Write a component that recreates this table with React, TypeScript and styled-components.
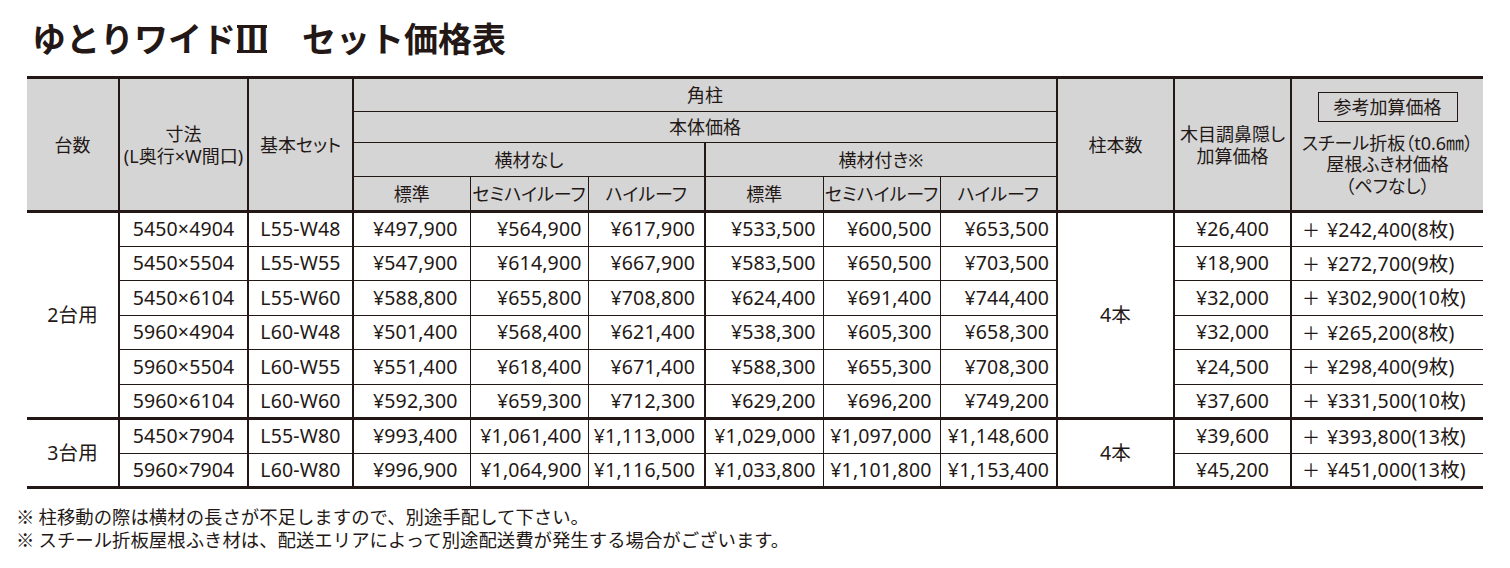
import React from 'react';
import styled, { createGlobalStyle, css } from 'styled-components';

const INK = '#231815';
const HEAD_BG = '#d5d5d5';

const GlobalStyle = createGlobalStyle`
  html, body {
    margin: 0;
    padding: 0;
    background: #fff;
  }
  body {
    color: ${INK};
    font-family: "Noto Sans", "Noto Sans CJK JP", sans-serif;
  }
`;

const Page = styled.div`
  width: 1510px;
  height: 568px;
  overflow: hidden;
`;

const Title = styled.h1`
  margin: 0;
  padding: 17px 0 0 32px;
  font-family: "Noto Sans CJK JP", sans-serif;
  font-size: 34px;
  font-weight: 700;
  line-height: 41px;
  white-space: pre;
`;

// Ⅲ with the top and bottom bars of the print face
const Roman = styled.span`
  display: inline-flex;
  justify-content: center;
  box-sizing: content-box;
  width: 30px;
  height: 22px;
  line-height: 22px;
  overflow: hidden;
  border-top: 3px solid ${INK};
  border-bottom: 3px solid ${INK};
  margin: 0 1px;
  vertical-align: -1px;
`;

const PriceTable = styled.table`
  margin: 18px 0 0 27px;
  width: 1456px;
  table-layout: fixed;
  border-collapse: collapse;
  border-top: 3px solid ${INK};
  border-bottom: 3px solid ${INK};
  border-left: none;
  border-right: none;
`;

type CellProps = {
  $l?: number;
  $b?: number;
  $first?: boolean;
  $last?: boolean;
  $align?: 'left' | 'center' | 'right';
  $pad?: number;
};

const cellBase = css<CellProps>`
  border: 1px solid ${INK};
  border-left-width: ${(p) => p.$l ?? 1}px;
  border-bottom-width: ${(p) => p.$b ?? 1}px;
  ${(p) => p.$first && 'border-left: none;'}
  ${(p) => p.$last && 'border-right: none;'}
  vertical-align: middle;
  white-space: nowrap;
  padding: 0;
`;

const HeadCell = styled.th<CellProps>`
  ${cellBase}
  background: ${HEAD_BG};
  font-family: "Noto Sans", "Noto Sans CJK JP", sans-serif;
  font-feature-settings: "palt";
  font-size: 18px;
  font-weight: 400;
  line-height: 22px;
  text-align: center;
`;

const BodyCell = styled.td<CellProps>`
  ${cellBase}
  font-size: 19.5px;
  letter-spacing: 0.15px;
  line-height: 22px;
  text-align: ${(p) => p.$align ?? 'right'};
  padding-left: ${(p) => (p.$align === 'left' ? p.$pad ?? 12 : 0)}px;
  padding-right: ${(p) => (p.$align === 'right' || !p.$align ? p.$pad ?? 8 : 0)}px;
`;

const Plus = styled.span`
  display: inline-block;
  width: 25px;
  font-family: "Noto Sans CJK JP", sans-serif;
  font-size: 18px;
`;

const HeadRow = styled.tr<{ $h: number }>`
  height: ${(p) => p.$h}px;
`;

const BodyRow = styled.tr`
  height: 34.5px;
`;

const RefBox = styled.div`
  display: inline-block;
  border: 1px solid ${INK};
  height: 28px;
  line-height: 28px;
  padding: 0 15px;
  margin-bottom: 11px;
`;

const StackText = styled.div`
  line-height: 21.5px;
`;

const Notes = styled.div`
  margin-top: 16px;
  padding-left: 16px;
  font-family: "Noto Sans CJK JP", sans-serif;
  font-size: 18.4px;
  line-height: 23px;
`;

type Group = { label: string; posts: string; rows: string[][] };

const groups: Group[] = [
  {
    label: '2台用',
    posts: '4本',
    rows: [
      ['5450×4904', 'L55-W48', '¥497,900', '¥564,900', '¥617,900', '¥533,500', '¥600,500', '¥653,500', '¥26,400', '¥242,400(8枚)'],
      ['5450×5504', 'L55-W55', '¥547,900', '¥614,900', '¥667,900', '¥583,500', '¥650,500', '¥703,500', '¥18,900', '¥272,700(9枚)'],
      ['5450×6104', 'L55-W60', '¥588,800', '¥655,800', '¥708,800', '¥624,400', '¥691,400', '¥744,400', '¥32,000', '¥302,900(10枚)'],
      ['5960×4904', 'L60-W48', '¥501,400', '¥568,400', '¥621,400', '¥538,300', '¥605,300', '¥658,300', '¥32,000', '¥265,200(8枚)'],
      ['5960×5504', 'L60-W55', '¥551,400', '¥618,400', '¥671,400', '¥588,300', '¥655,300', '¥708,300', '¥24,500', '¥298,400(9枚)'],
      ['5960×6104', 'L60-W60', '¥592,300', '¥659,300', '¥712,300', '¥629,200', '¥696,200', '¥749,200', '¥37,600', '¥331,500(10枚)'],
    ],
  },
  {
    label: '3台用',
    posts: '4本',
    rows: [
      ['5450×7904', 'L55-W80', '¥993,400', '¥1,061,400', '¥1,113,000', '¥1,029,000', '¥1,097,000', '¥1,148,600', '¥39,600', '¥393,800(13枚)'],
      ['5960×7904', 'L60-W80', '¥996,900', '¥1,064,900', '¥1,116,500', '¥1,033,800', '¥1,101,800', '¥1,153,400', '¥45,200', '¥451,000(13枚)'],
    ],
  },
];

const colWidths = [92, 129, 105, 117, 118, 117, 118, 117, 117, 117, 117, 192];
const pricePads = [12, 6, 9, 7, 8, 7];
const subHeads = ['標準', 'セミハイルーフ', 'ハイルーフ', '標準', 'セミハイルーフ', 'ハイルーフ'];

const App: React.FC = () => {
  return (
    <Page>
      <GlobalStyle />
      <Title>
        ゆとりワイド<Roman>Ⅲ</Roman>　セット価格表
      </Title>
      <PriceTable>
        <colgroup>
          {colWidths.map((w, i) => (
            <col key={i} style={{ width: w }} />
          ))}
        </colgroup>
        <thead>
          <HeadRow $h={34}>
            <HeadCell rowSpan={4} $first $b={3}>台数</HeadCell>
            <HeadCell rowSpan={4} $l={2} $b={3}>
              寸法
              <br />
              (L奥行×W間口)
            </HeadCell>
            <HeadCell rowSpan={4} $l={2} $b={3}>基本セット</HeadCell>
            <HeadCell colSpan={6} $l={2}>角柱</HeadCell>
            <HeadCell rowSpan={4} $l={2} $b={3}>柱本数</HeadCell>
            <HeadCell rowSpan={4} $l={2} $b={3}>
              木目調鼻隠し
              <br />
              加算価格
            </HeadCell>
            <HeadCell rowSpan={4} $l={2} $b={3} $last>
              <RefBox>参考加算価格</RefBox>
              <StackText>
                スチール折板（t0.6㎜）
                <br />
                屋根ふき材価格
                <br />
                （ペフなし）
              </StackText>
            </HeadCell>
          </HeadRow>
          <HeadRow $h={31}>
            <HeadCell colSpan={6} $l={2}>本体価格</HeadCell>
          </HeadRow>
          <HeadRow $h={34}>
            <HeadCell colSpan={3} $l={2}>横材なし</HeadCell>
            <HeadCell colSpan={3} $l={2}>横材付き※</HeadCell>
          </HeadRow>
          <HeadRow $h={35}>
            {subHeads.map((s, i) => (
              <HeadCell key={i} $l={i === 0 || i === 3 ? 2 : 1} $b={3}>
                {s}
              </HeadCell>
            ))}
          </HeadRow>
        </thead>
        <tbody>
          {groups.map((g) =>
            g.rows.map((r, ri) => {
              const b = ri === g.rows.length - 1 ? 3 : 1;
              return (
                <BodyRow key={g.label + ri}>
                  {ri === 0 && (
                    <BodyCell rowSpan={g.rows.length} $first $b={3} $align="center">
                      {g.label}
                    </BodyCell>
                  )}
                  <BodyCell $l={2} $b={b} $align="center">{r[0]}</BodyCell>
                  <BodyCell $l={2} $b={b} $align="center">{r[1]}</BodyCell>
                  {r.slice(2, 8).map((v, i) => (
                    <BodyCell key={i} $l={i === 0 || i === 3 ? 2 : 1} $b={b} $pad={pricePads[i]}>
                      {v}
                    </BodyCell>
                  ))}
                  {ri === 0 && (
                    <BodyCell rowSpan={g.rows.length} $l={2} $b={3} $align="center">
                      {g.posts}
                    </BodyCell>
                  )}
                  <BodyCell $l={2} $b={b} $align="center">{r[8]}</BodyCell>
                  <BodyCell $l={2} $b={b} $last $align="left" $pad={10}>
                    <Plus>＋</Plus>
                    {r[9]}
                  </BodyCell>
                </BodyRow>
              );
            })
          )}
        </tbody>
      </PriceTable>
      <Notes>
        ※ 柱移動の際は横材の長さが不足しますので、別途手配して下さい。
        <br />
        ※ スチール折板屋根ふき材は、配送エリアによって別途配送費が発生する場合がございます。
      </Notes>
    </Page>
  );
};

export default App;
